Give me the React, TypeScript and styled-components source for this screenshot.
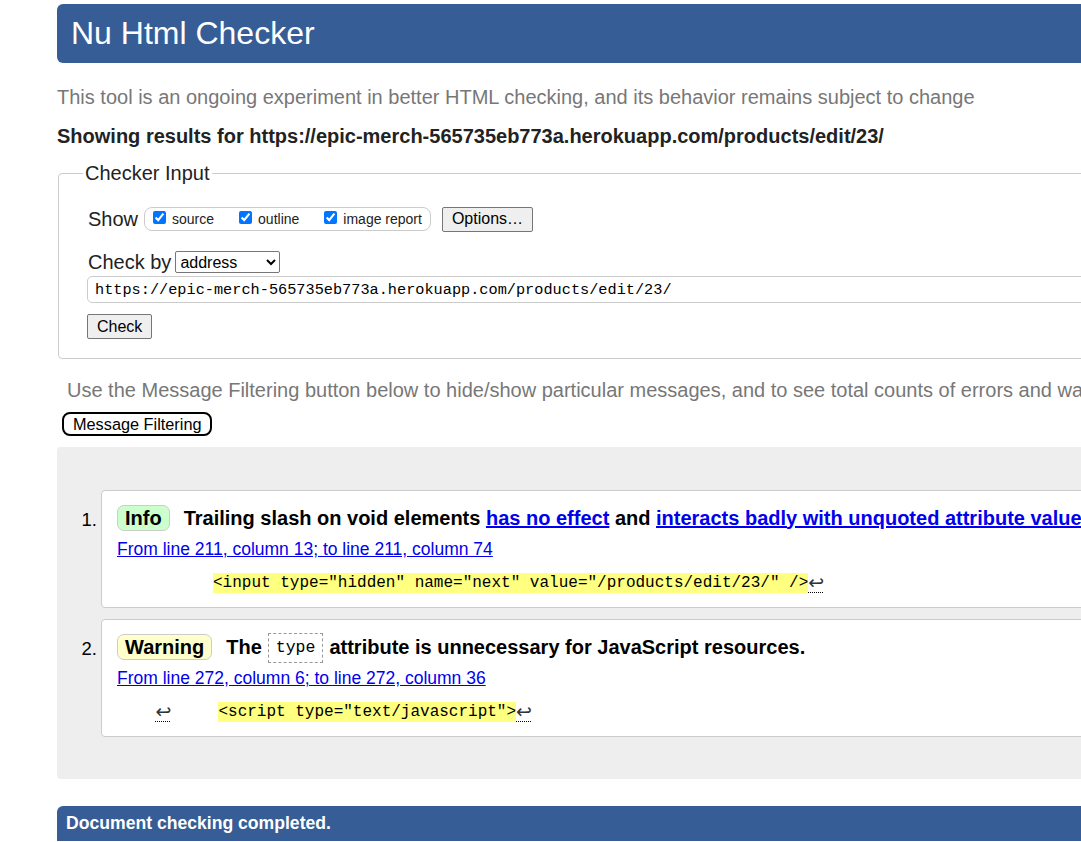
import React from "react";
import styled, { createGlobalStyle } from "styled-components";

const Global = createGlobalStyle`
  html, body { margin: 0; padding: 0; overflow: hidden; background: #fff; }
  body { font-family: "Liberation Sans", Arial, sans-serif; color: #000; }
`;

const Page = styled.div`
  width: 1260px;
  padding: 4px 0 0 57px;
`;

const Header = styled.h1`
  margin: 0;
  height: 59px;
  line-height: 59px;
  padding-left: 14px;
  background: #365d95;
  color: #fff;
  font-size: 32px;
  font-weight: normal;
  border-radius: 6px;
`;

const Intro = styled.p`
  margin: 22px 0 0;
  font-size: 20px;
  line-height: 24px;
  color: #777;
  white-space: nowrap;
`;

const Showing = styled.p`
  margin: 16px 0 0;
  font-size: 20px;
  line-height: 22px;
  font-weight: bold;
  color: #222;
  white-space: nowrap;
`;

const Fieldset = styled.fieldset`
  margin: 14px 0 0 1px;
  padding: 21px 0 19px 29px;
  border: 1px solid #ccc;
  border-radius: 4px;
`;

const Legend = styled.legend`
  margin-left: -5px;
  padding: 0 2px;
  font-size: 20px;
  line-height: 24px;
  color: #222;
`;

const Row = styled.div<{ $gap: number; $top?: number }>`
  display: flex;
  align-items: center;
  gap: ${(p) => p.$gap}px;
  margin-top: ${(p) => p.$top ?? 0}px;
  height: 26px;
`;

const Label = styled.span`
  font-size: 20px;
  color: #222;
`;

const CheckGroup = styled.span`
  display: flex;
  align-items: center;
  gap: 25px;
  height: 22px;
  padding: 0 8px;
  border: 1px solid #ccc;
  border-radius: 8px;
`;

const CheckItem = styled.label`
  display: flex;
  align-items: center;
  font-size: 14px;
  color: #222;
`;

const Box = styled.input`
  width: 13px;
  height: 13px;
  margin: 0 6px 4px 0;
  accent-color: #0075ff;
`;

const Button = styled.button`
  height: 25px;
  padding: 0 9px;
  margin: 0;
  font-family: "Liberation Sans", Arial, sans-serif;
  font-size: 16px;
  color: #000;
  background: #efefef;
  border: 1px solid #767676;
  border-radius: 2px;
`;

const OptionsButton = styled(Button)`
  margin-left: 5px;
`;

const Select = styled.select`
  width: 105px;
  height: 22px;
  margin: 0;
  font-family: "Liberation Sans", Arial, sans-serif;
  font-size: 16px;
  color: #000;
  background: #fff;
  border: 1px solid #767676;
  border-radius: 2px;
`;

const UrlInput = styled.input`
  display: block;
  box-sizing: border-box;
  width: 1260px;
  height: 27px;
  margin: 1px 0 0 -1px;
  padding: 0 7px;
  font-family: "Liberation Mono", "DejaVu Sans Mono", monospace;
  font-size: 15.25px;
  color: #000;
  border: 1px solid #ccc;
  border-radius: 5px;
`;

const CheckButton = styled(Button)`
  display: block;
  margin: 11px 0 0 -1px;
  padding: 0 9px;
`;

const FilterHint = styled.p`
  margin: 19px 0 0 10px;
  font-size: 20px;
  line-height: 24px;
  color: #777;
  white-space: nowrap;
`;

const FilterButton = styled.button`
  display: block;
  height: 24px;
  margin: 10px 0 0 5px;
  padding: 0 8px 0 9px;
  font-family: "Liberation Sans", Arial, sans-serif;
  font-size: 16.3px;
  color: #000;
  background: #fff;
  border: 2px solid #000;
  border-radius: 8px;
`;

const Results = styled.ol`
  list-style: none;
  margin: 11px 0 0;
  padding: 43px 0 42px;
  background: #eee;
  border-radius: 4px;
  display: flex;
  flex-direction: column;
  gap: 11px;
`;

const Item = styled.li`
  display: flex;
`;

const Num = styled.span`
  width: 40px;
  padding: 19px 4px 0 0;
  text-align: right;
  font-size: 18.5px;
  line-height: 21px;
  color: #000;
  flex-shrink: 0;
`;

const Card = styled.div`
  flex: 1;
  background: #fff;
  border: 1px solid #ccc;
  border-radius: 4px;
  padding: 14px 15px 13px;
`;

const Headline = styled.p`
  margin: 0;
  display: flex;
  align-items: center;
  gap: 6px;
  height: 26px;
  font-size: 20px;
  font-weight: bold;
  white-space: nowrap;
`;

const Badge = styled.strong<{ $bg: string }>`
  display: inline-block;
  height: 24px;
  line-height: 24px;
  padding: 0 7px;
  margin-right: 8px;
  background: ${(p) => p.$bg};
  border: 1px solid #ccc;
  border-radius: 7px;
  font-size: 20px;
`;

const MsgLink = styled.a`
  color: #0000ee;
  text-decoration: underline;
`;

const InlineCode = styled.code`
  display: inline-block;
  margin-top: 2px;
  padding: 4px 7px;
  line-height: 20px;
  font-family: "Liberation Mono", "DejaVu Sans Mono", monospace;
  font-size: 16.5px;
  font-weight: normal;
  border: 1px dashed #999;
`;

const Location = styled.a`
  display: block;
  margin-top: 9px;
  font-size: 17.5px;
  line-height: 19px;
  color: #0000ee;
  text-decoration: underline;
`;

const Extract = styled.pre`
  margin: 14px 0 0;
  height: 21px;
  overflow: visible;
  font-family: "Liberation Mono", "DejaVu Sans Mono", monospace;
  font-size: 16px;
  line-height: 21px;
  color: #000;
`;

const Highlight = styled.mark`
  padding: 1px 0;
  background: #ffff80;
  color: #000;
`;

const LineBreak = styled.span`
  display: inline-block;
  width: 15px;
  height: 19px;
  line-height: 19px;
  vertical-align: top;
  text-align: center;
  font-family: "DejaVu Sans", sans-serif;
  font-size: 19px;
  color: #333;
  border-bottom: 1px dotted #000;
`;

const Footer = styled.p`
  margin: 27px 0 0;
  height: 35px;
  line-height: 35px;
  padding-left: 9px;
  background: #365d95;
  color: #fff;
  font-size: 17.6px;
  font-weight: bold;
  border-radius: 6px 6px 0 0;
`;

const url = "https://epic-merch-565735eb773a.herokuapp.com/products/edit/23/";

export default function App() {
  return (
    <>
      <Global />
      <Page>
        <Header>Nu Html Checker</Header>
        <Intro>
          This tool is an ongoing experiment in better HTML checking, and its behavior remains subject to change
        </Intro>
        <Showing>Showing results for {url}</Showing>
        <Fieldset>
          <Legend>Checker Input</Legend>
          <Row $gap={6}>
            <Label>Show</Label>
            <CheckGroup>
              <CheckItem>
                <Box type="checkbox" defaultChecked />
                source
              </CheckItem>
              <CheckItem>
                <Box type="checkbox" defaultChecked />
                outline
              </CheckItem>
              <CheckItem>
                <Box type="checkbox" defaultChecked />
                image report
              </CheckItem>
            </CheckGroup>
            <OptionsButton>Options…</OptionsButton>
          </Row>
          <Row $gap={4} $top={17}>
            <Label>Check by</Label>
            <Select defaultValue="address">
              <option value="address">address</option>
              <option value="file">file upload</option>
              <option value="text">text input</option>
            </Select>
          </Row>
          <UrlInput type="url" defaultValue={url} readOnly />
          <CheckButton>Check</CheckButton>
        </Fieldset>
        <FilterHint>
          Use the Message Filtering button below to hide/show particular messages, and to see total counts of errors and warnings.
        </FilterHint>
        <FilterButton>Message Filtering</FilterButton>
        <Results>
          <Item>
            <Num>1.</Num>
            <Card>
              <Headline>
                <Badge $bg="#ccffcc">Info</Badge>
                <span>
                  Trailing slash on void elements <MsgLink href="#">has no effect</MsgLink> and{" "}
                  <MsgLink href="#">interacts badly with unquoted attribute values</MsgLink>.
                </span>
              </Headline>
              <Location href="#">From line 211, column 13; to line 211, column 74</Location>
              <Extract>
                {"          "}
                <Highlight>{'<input type="hidden" name="next" value="/products/edit/23/" />'}</Highlight>
                <LineBreak>↩</LineBreak>
              </Extract>
            </Card>
          </Item>
          <Item>
            <Num>2.</Num>
            <Card>
              <Headline>
                <Badge $bg="#ffffcc">Warning</Badge>
                <span>The</span>
                <InlineCode>type</InlineCode>
                <span>attribute is unnecessary for JavaScript resources.</span>
              </Headline>
              <Location href="#">From line 272, column 6; to line 272, column 36</Location>
              <Extract>
                {"    "}
                <LineBreak>↩</LineBreak>
                {"     "}
                <Highlight>{'<script type="text/javascript">'}</Highlight>
                <LineBreak>↩</LineBreak>
              </Extract>
            </Card>
          </Item>
        </Results>
        <Footer>Document checking completed.</Footer>
      </Page>
    </>
  );
}
